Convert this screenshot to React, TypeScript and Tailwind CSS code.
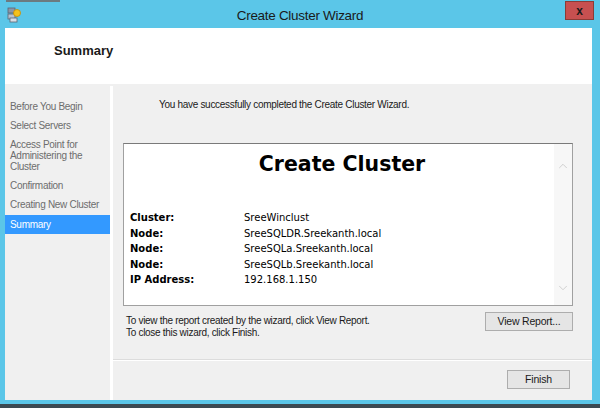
import { ChevronDown, ChevronUp } from "lucide-react";

const steps = [
  { label: "Before You Begin" },
  { label: "Select Servers" },
  { label: "Access Point for Administering the Cluster" },
  { label: "Confirmation" },
  { label: "Creating New Cluster" },
  { label: "Summary", active: true },
];

const rows = [
  ["Cluster:", "SreeWinclust"],
  ["Node:", "SreeSQLDR.Sreekanth.local"],
  ["Node:", "SreeSQLa.Sreekanth.local"],
  ["Node:", "SreeSQLb.Sreekanth.local"],
  ["IP Address:", "192.168.1.150"],
];

function ClusterIcon() {
  return (
    <svg width="14" height="16" viewBox="0 0 14 16">
      <rect x="1" y="1" width="7" height="5" fill="#8a96a8" stroke="#5a6472" strokeWidth="0.8" />
      <rect x="1" y="7" width="7" height="5" fill="#b8c2d0" stroke="#5a6472" strokeWidth="0.8" />
      <rect x="3" y="11" width="7" height="4" fill="#d8dee6" stroke="#5a6472" strokeWidth="0.8" />
      <circle cx="10" cy="6" r="3.5" fill="#f5c21b" stroke="#c98a00" strokeWidth="0.8" />
    </svg>
  );
}

function WinButton({ label, className }: { label: string; className?: string }) {
  return (
    <button
      className={`h-[19px] border border-[#adadad] bg-[#e5e5e5] text-[10.5px] tracking-[-0.2px] text-[#1a1a1a] ${className ?? ""}`}
    >
      {label}
    </button>
  );
}

export default function App() {
  return (
    <div
      className="flex h-[408px] w-[600px] flex-col overflow-hidden bg-[#5bc6e8] text-[#1a1a1a]"
      style={{ fontFamily: '"Liberation Sans", Arial, sans-serif' }}
    >
      {/* title bar */}
      <div className="relative flex h-[28px] shrink-0 items-center">
        <div className="absolute left-[6px] top-0 h-[2px] w-[54px] bg-[#6c7a80]" />
        <div className="ml-[7px] mt-[1px]">
          <ClusterIcon />
        </div>
        <div className="absolute inset-x-0 top-[6px] text-center text-[13.5px] tracking-[-0.3px] text-[#1a1a1a]">
          Create Cluster Wizard
        </div>
        <div className="absolute right-[6px] top-[1px] flex h-[19px] w-[29px] items-center justify-center border border-[#8a3c36] bg-[#c75050] text-[12px] font-bold text-[#1a1a1a]">
          x
        </div>
      </div>

      {/* client area */}
      <div className="ml-[5px] mr-[8px] flex h-[372px] shrink-0 flex-col bg-[#f0f0f0]">
        <div className="flex h-[56px] shrink-0 items-center bg-white pl-[49px]">
          <span className="mt-[-10px] text-[13px] font-bold text-[#1a1a1a]">Summary</span>
        </div>

        <div className="mt-[2px] flex min-h-0 flex-1">
          {/* nav */}
          <div className="w-[105px] shrink-0 bg-[#f0f0f0] pt-[11px] text-[10px] leading-[11px] tracking-[-0.3px] text-[#6d6d6d]">
            {steps.map((s) => (
              <div
                key={s.label}
                className={`py-[4px] pl-[5px] pr-[10px] ${s.active ? "mt-[1px] bg-[#3399ff] text-white" : ""}`}
              >
                {s.label}
              </div>
            ))}
          </div>
          <div className="w-[3px] shrink-0 bg-white" />

          {/* content */}
          <div className="flex min-w-0 flex-1 flex-col text-[10px] tracking-[-0.3px]">
            <div className="flex-1 pl-[10px] pr-[19px]">
              <p className="mt-[12px] pl-[36px] leading-[13px] text-[#1a1a1a]">
                You have successfully completed the Create Cluster Wizard.
              </p>

              <div className="mt-[32px] flex h-[163px] border border-[#a0a0a0] border-t-[#7a7a7a] bg-white tracking-normal">
                <div
                  className="flex-1 pl-[6px]"
                  style={{ fontFamily: '"DejaVu Sans", Verdana, sans-serif' }}
                >
                  <h1 className="mt-[6px] text-center text-[20.5px] font-bold leading-[28px] text-black">
                    Create Cluster
                  </h1>
                  <div className="mt-[32px] text-[10px] leading-[15.5px] text-black">
                    {rows.map(([k, v], i) => (
                      <div key={i} className="flex">
                        <span className="w-[114px] font-bold">{k}</span>
                        <span>{v}</span>
                      </div>
                    ))}
                  </div>
                </div>
                <div className="flex w-[18px] flex-col items-center justify-between bg-[#f7f7f7] pb-[10px] pt-[15px] text-[#c4c4c4]">
                  <ChevronUp size={14} strokeWidth={1.3} />
                  <ChevronDown size={14} strokeWidth={1.3} />
                </div>
              </div>

              <div className="mt-[6px] flex items-start justify-between">
                <div className="pl-[3px] pt-[3px] leading-[12px] text-[#1a1a1a]">
                  <div>To view the report created by the wizard, click View Report.</div>
                  <div>To close this wizard, click Finish.</div>
                </div>
                <WinButton label="View Report..." className="w-[88px]" />
              </div>
            </div>

            <div className="h-[2px] shrink-0 border-t border-[#dcdcdc] bg-white" />
            <div className="flex h-[39px] shrink-0 items-start justify-end pr-[22px] pt-[9px]">
              <WinButton label="Finish" className="w-[63px]" />
            </div>
          </div>
        </div>
      </div>

      <div className="h-[4px] shrink-0" />
      <div className="flex-1 bg-[#3c4a52]" />
    </div>
  );
}
